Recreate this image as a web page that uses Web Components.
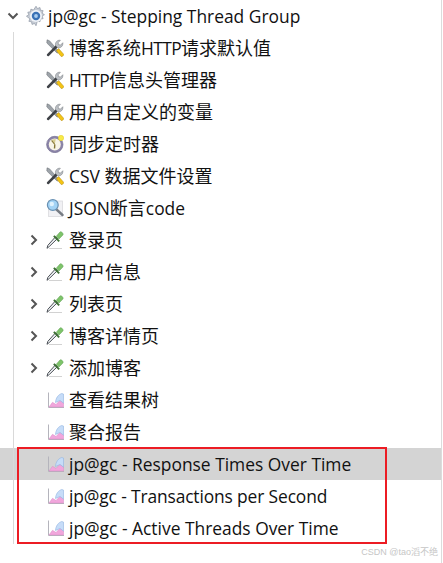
<!DOCTYPE html>
<html>
<head>
<meta charset="utf-8">
<style>
  html, body { margin: 0; background: #fff; }
  body { width: 443px; height: 563px; overflow: hidden; font-family: "Open Sans", "Noto Sans CJK SC", sans-serif; }
</style>
</head>
<body>
<tree-view>
  <tree-row level="0" twisty="open" icon="gear"><span class="solo">jp@gc - Stepping Thread Group</span></tree-row>
  <tree-row icon="tools">博客系统<span class="caps">HTTP</span>请求默认值</tree-row>
  <tree-row icon="tools"><span class="caps">HTTP</span>信息头管理器</tree-row>
  <tree-row icon="tools">用户自定义的变量</tree-row>
  <tree-row icon="timer">同步定时器</tree-row>
  <tree-row icon="tools"><span>CSV </span>数据文件设置</tree-row>
  <tree-row icon="search"><span>JSON</span>断言<span>code</span></tree-row>
  <tree-row twisty="closed" icon="dropper">登录页</tree-row>
  <tree-row twisty="closed" icon="dropper">用户信息</tree-row>
  <tree-row twisty="closed" icon="dropper">列表页</tree-row>
  <tree-row twisty="closed" icon="dropper">博客详情页</tree-row>
  <tree-row twisty="closed" icon="dropper">添加博客</tree-row>
  <tree-row icon="graph">查看结果树</tree-row>
  <tree-row icon="graph">聚合报告</tree-row>
  <tree-row icon="graph" selected><span class="solo">jp@gc - Response Times Over Time</span></tree-row>
  <tree-row icon="graph"><span class="solo tight">jp@gc - Transactions per Second</span></tree-row>
  <tree-row icon="graph"><span class="solo">jp@gc - Active Threads Over Time</span></tree-row>
</tree-view>

<script>
const ICONS = {
  gear: `
    <path d="M9 .2l1.300 2.100 2.300-.9.400 2.400 2.400.4-.9 2.300 2.100 1.300-2.100 1.300.9 2.300-2.400.4-.4 2.400-2.300-.9L9 17.800l-1.300-2.100-2.300.9-.4-2.400-2.400-.4.9-2.300L.4 9.200l2.100-1.300-.9-2.300 2.400-.4.4-2.400 2.300.9z" fill="#c6ccd5" stroke="#8d95a3" stroke-width=".6"/>
    <circle cx="9" cy="9" r="5.400" fill="#f0f3f8"/>
    <circle cx="9" cy="9" r="3.800" fill="#3a72b6"/>
    <circle cx="9" cy="9" r="1.700" fill="#a9cdf0"/>`,
  tools: `
    <path d="M1 .8l2.500 1 9.500 10.600-1.800 1.800L.8 4z" fill="#9da3a9" stroke="#686d73" stroke-width=".5"/>
    <path d="M10.400 11.800l2.200-2.200 5 5.600c.6 1-1.500 3-2.400 2.300z" fill="#f4c414" stroke="#b0860a" stroke-width=".5"/>
    <path d="M1 15.200l9-9.100 1.900 1.900-9 9c-1.200.7-2.600-.6-1.900-1.800z" fill="#3f4247"/>
    <path d="M9.600 6.600c-.9-3 1.600-5.900 4.800-5.300l-2.300 2.500.5 1.800 1.900.5 2.300-2.400c.6 3.300-2.300 5.800-5.300 5z" fill="#bcc0c5" stroke="#6f7379" stroke-width=".5"/>`,
  timer: `
    <circle cx="8.800" cy="9.500" r="8.200" fill="#8b84a8" stroke="#6c678a" stroke-width=".6"/>
    <circle cx="8.800" cy="9.500" r="6" fill="#f8f4e6"/>
    <path d="M8.800 9.500L5.300 4.700l4.400-.7z" fill="#d8cd92"/>
    <path d="M8.800 9.500l-.3 4" stroke="#857536" stroke-width="1.400" fill="none"/>
    <path d="M8.800 9.500L5.600 5.500" stroke="#857536" stroke-width="1.200" fill="none"/>
    <circle cx="15" cy="3" r="2.700" fill="#f7ea48" stroke="#e2cb2a" stroke-width=".5"/>`,
  search: `
    <rect x="2.500" y="2" width="14" height="15.500" fill="#f1f1f4" stroke="#dadade" stroke-width=".8"/>
    <path d="M10.500 10.500l6 5.500" stroke="#777c83" stroke-width="2.400" stroke-linecap="round"/>
    <circle cx="6.800" cy="6" r="5.400" fill="#a3d3f5" stroke="#6890b2" stroke-width="1.200"/>
    <circle cx="5.800" cy="5" r="2.200" fill="#e0f2fd"/>`,
  dropper: `
    <path d="M11.500 7.500L3.500 15.300l-2.500 2 .8-2.900L9.500 5.800z" fill="#eceff2" stroke="#4d5258" stroke-width="1"/>
    <path d="M8.500 4.300l5.400 5.400-1.400 1.200-5.300-5.300z" fill="#3f7136"/>
    <path d="M10.300 5.200L14 1c1.100-1.100 4 1.700 2.900 3L13 8z" fill="#7ec46a" stroke="#5a9a4e" stroke-width=".5"/>
    <path d="M3 17.500h13" stroke="#d2d2d2" stroke-width="1"/>`,
  graph: `
    <path d="M2.500 1.500v15H18" fill="none" stroke="#b4b4bc" stroke-width="1"/>
    <path d="M3 16l3.500-4.700 3.500 2.200 4-4.200 3.500 2.700V16z" fill="#f1a6dc" stroke="#d98ac5" stroke-width=".5"/>
    <path d="M9.500 11.500c.2-4.300 2.700-8 6.300-9l1.700.6v9l-3.500-2.700z" fill="#c6dcf8" stroke="#90b4e0" stroke-width=".6"/>`
};

class TreeRow extends HTMLElement {
  connectedCallback() {
    const root = this.getAttribute('level') === '0';
    const twisty = this.getAttribute('twisty');
    let arrow = '';
    if (twisty === 'open') arrow = '<path d="M1.500 3.500L6 8l4.500-4.500" />';
    if (twisty === 'closed') arrow = '<path d="M3.500 1.500L8 6l-4.500 4.500" />';
    this.attachShadow({ mode: 'open' });
    this.shadowRoot.innerHTML = `
      <style>
        :host {
          display: flex;
          align-items: center;
          height: 32px;
          box-sizing: border-box;
          padding-left: ${root ? 7 : 28}px;
          font-size: 18px;
          color: #111;
          white-space: nowrap;
        }
        :host([selected]) { background: #d4d4d4; }
        .twisty { width: 12px; height: 12px; flex: none; margin-right: ${root ? 7 : 6}px; }
        .twisty path { fill: none; stroke: #555; stroke-width: 2; }
        .icon { width: ${root ? 20 : 18}px; height: ${root ? 20 : 18}px; flex: none; margin-right: ${root ? 2 : 5}px; }
        .label { position: relative; top: -1px; }
        ::slotted(span) { font-size: 17.4px; }
        ::slotted(.caps) { letter-spacing: -0.6px; }
        ::slotted(.solo) { position: relative; top: 1px; }
        ::slotted(.tight) { letter-spacing: -0.13px; }
      </style>
      <svg class="twisty" viewBox="0 0 12 12">${arrow}</svg>
      <svg class="icon" viewBox="0 0 18 18">${ICONS[this.getAttribute('icon')]}</svg>
      <div class="label"><slot></slot></div>
    `;
  }
}
customElements.define('tree-row', TreeRow);

class TreeView extends HTMLElement {
  connectedCallback() {
    this.attachShadow({ mode: 'open' });
    this.shadowRoot.innerHTML = `
      <style>
        :host {
          display: block;
          position: relative;
          width: 442px;
          height: 563px;
          box-sizing: border-box;
          border-right: 1px solid #dcdcdc;
        }
        /* the tree guide line */
        .guide { position: absolute; left: 13px; top: 32px; width: 1px; height: 512px; background: #d9d9d9; }
        /* annotation drawn on top of the screenshot */
        .mark { position: absolute; left: 17px; top: 447px; width: 370px; height: 97px; box-sizing: border-box; border: 2px solid #ec1c24; }
        .credit {
          position: absolute; right: 3px; bottom: 5px;
          font: 9px "Liberation Sans", "Noto Sans CJK SC", sans-serif;
          color: #c6c6c6;
        }
      </style>
      <slot></slot>
      <div class="guide"></div>
      <div class="mark"></div>
      <div class="credit">CSDN @tao滔不绝</div>
    `;
  }
}
customElements.define('tree-view', TreeView);
</script>
</body>
</html>
